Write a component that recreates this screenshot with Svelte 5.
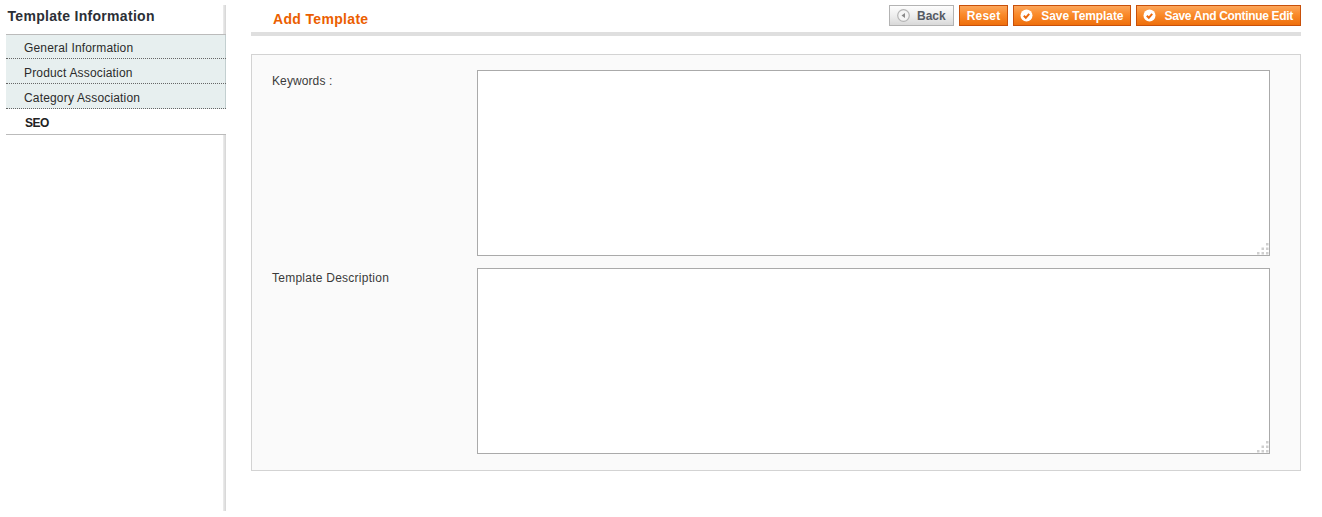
<script>
  const navItems = ['General Information', 'Product Association', 'Category Association'];
  const fields = [
    { id: 'kw', label: 'Keywords :' },
    { id: 'desc', label: 'Template Description' }
  ];
  const grip = [
    [9, 0],
    [4.5, 4.5],
    [9, 4.5],
    [0, 9],
    [4.5, 9],
    [9, 9]
  ];
</script>

<div class="page">
  <aside class="sidebar">
    <h3 class="side-title">Template Information</h3>
    <ul class="tabs">
      {#each navItems as item}
        <li class="tab">{item}</li>
      {/each}
      <li class="tab active"><span class="seo">SEO</span></li>
    </ul>
  </aside>

  <main class="content">
    <header class="head">
      <h3 class="title">Add Template</h3>
      <div class="actions">
        <button class="btn back">
          <svg class="ico" width="13" height="13" viewBox="0 0 13 13">
            <circle cx="6.5" cy="6.5" r="5.8" fill="#f4f4f4" stroke="#b5b5b5" stroke-width="1.2" />
            <path d="M8 4v5L4.5 6.5z" fill="#8a8a8a" />
          </svg>
          Back
        </button>
        <button class="btn reset">Reset</button>
        <button class="btn save">
          <svg class="ico" width="13" height="13" viewBox="0 0 13 13">
            <circle cx="6.5" cy="6.5" r="6" fill="#fff" />
            <path d="M3.8 6.8l2 2 3.4-4" fill="none" stroke="#eb6a10" stroke-width="2" />
          </svg>
          Save Template
        </button>
        <button class="btn cont">
          <svg class="ico" width="13" height="13" viewBox="0 0 13 13">
            <circle cx="6.5" cy="6.5" r="6" fill="#fff" />
            <path d="M3.8 6.8l2 2 3.4-4" fill="none" stroke="#eb6a10" stroke-width="2" />
          </svg>
          Save And Continue Edit
        </button>
      </div>
    </header>

    <section class="panel">
      {#each fields as field}
        <div class="row">
          <label class="lbl" for={field.id}>{field.label}</label>
          <div class="area-wrap">
            <textarea id={field.id} class="area"></textarea>
            <svg class="grip" width="12" height="12" viewBox="0 0 12 12">
              {#each grip as [x, y]}
                <rect {x} {y} width="2.5" height="2.5" fill="#cfcfcf" />
              {/each}
            </svg>
          </div>
        </div>
      {/each}
    </section>
  </main>
</div>

<style>
  :global(body) {
    margin: 0;
    background: #fff;
    font: 12px "Liberation Sans", Arial, sans-serif;
    color: #2f2f2f;
  }

  .page {
    display: flex;
    align-items: flex-start;
    padding: 5px 0 0 6px;
  }

  .sidebar {
    position: relative;
    width: 220px;
    height: 506px;
    flex: none;
  }

  .sidebar::after {
    content: '';
    position: absolute;
    top: 0;
    bottom: 0;
    right: 0;
    width: 3px;
    background: linear-gradient(to right, #ededed, #d5d5d5);
  }

  .side-title {
    margin: 0;
    height: 29px;
    padding: 3px 0 0 1.5px;
    box-sizing: border-box;
    font-size: 14px;
    line-height: 16px;
    font-weight: bold;
    letter-spacing: 0.3px;
    color: #2b2f36;
  }

  .tabs {
    position: relative;
    z-index: 1;
    list-style: none;
    margin: 0;
    padding: 0;
    border-top: 1px solid #bbb;
  }

  .tab {
    height: 22px;
    padding: 2px 0 0 18px;
    line-height: 25px;
    background: #e7efef;
    border-bottom: 1px dotted #666;
    box-shadow: inset -1px 0 0 #c3cfd0;
    letter-spacing: 0.17px;
    color: #2b2b2b;
  }

  .tab:first-child {
    padding-top: 1px;
  }

  .tab.active {
    height: 23px;
    padding-left: 19px;
    background: #fff;
    border-bottom: 1px solid #bbb;
    box-shadow: none;
    font-weight: bold;
    color: #222;
  }

  .seo {
    letter-spacing: -0.5px;
  }

  .content {
    width: 1050px;
    margin-left: 25px;
    flex: none;
  }

  .head {
    display: flex;
    justify-content: space-between;
    align-items: flex-start;
    height: 27px;
    border-bottom: 4px solid #dfdfdf;
  }

  .title {
    margin: 0;
    padding: 6px 0 0 22px;
    font-size: 14px;
    line-height: 16px;
    font-weight: bold;
    letter-spacing: 0.33px;
    color: #eb5e00;
  }

  .actions {
    display: flex;
    gap: 5px;
  }

  .btn {
    display: flex;
    align-items: center;
    gap: 8px;
    height: 21px;
    padding: 0 7px 0 6px;
    border: 1px solid #c8500a;
    background: linear-gradient(to bottom, #fca65b 0%, #fa8a2a 45%, #ee6f0c 100%);
    color: #fff;
    font: bold 12px "Liberation Sans", Arial, sans-serif;
    white-space: nowrap;
    cursor: pointer;
  }

  .btn .ico {
    flex: none;
  }

  .btn.save {
    letter-spacing: -0.08px;
  }

  .btn.cont {
    letter-spacing: -0.32px;
  }

  .btn.reset {
    padding: 0 7px;
    letter-spacing: 0.2px;
  }

  .btn.back {
    gap: 7px;
    padding: 0 7px;
    border-color: #b3b3b3;
    background: linear-gradient(to bottom, #fdfdfd 0%, #ececec 55%, #d9d9d9 100%);
    color: #555a63;
  }

  .panel {
    box-sizing: border-box;
    height: 417px;
    margin-top: 18px;
    padding: 15px 30px 0 20px;
    background: #fafafa;
    border: 1px solid #d3d3d3;
  }

  .row {
    display: flex;
    margin-bottom: 12px;
  }

  .lbl {
    width: 205px;
    flex: none;
    padding-top: 4px;
    line-height: 14px;
    letter-spacing: 0.1px;
    color: #3a3a3a;
  }

  .row + .row .lbl {
    padding-top: 3px;
    letter-spacing: 0.25px;
  }

  .area-wrap {
    position: relative;
    width: 793px;
    height: 186px;
  }

  .area {
    display: block;
    box-sizing: border-box;
    width: 100%;
    height: 100%;
    margin: 0;
    padding: 2px;
    background: #fff;
    border: 1px solid #aaa;
    outline: none;
    resize: none;
    font: inherit;
  }

  .grip {
    position: absolute;
    right: 1px;
    bottom: 1px;
  }
</style>
